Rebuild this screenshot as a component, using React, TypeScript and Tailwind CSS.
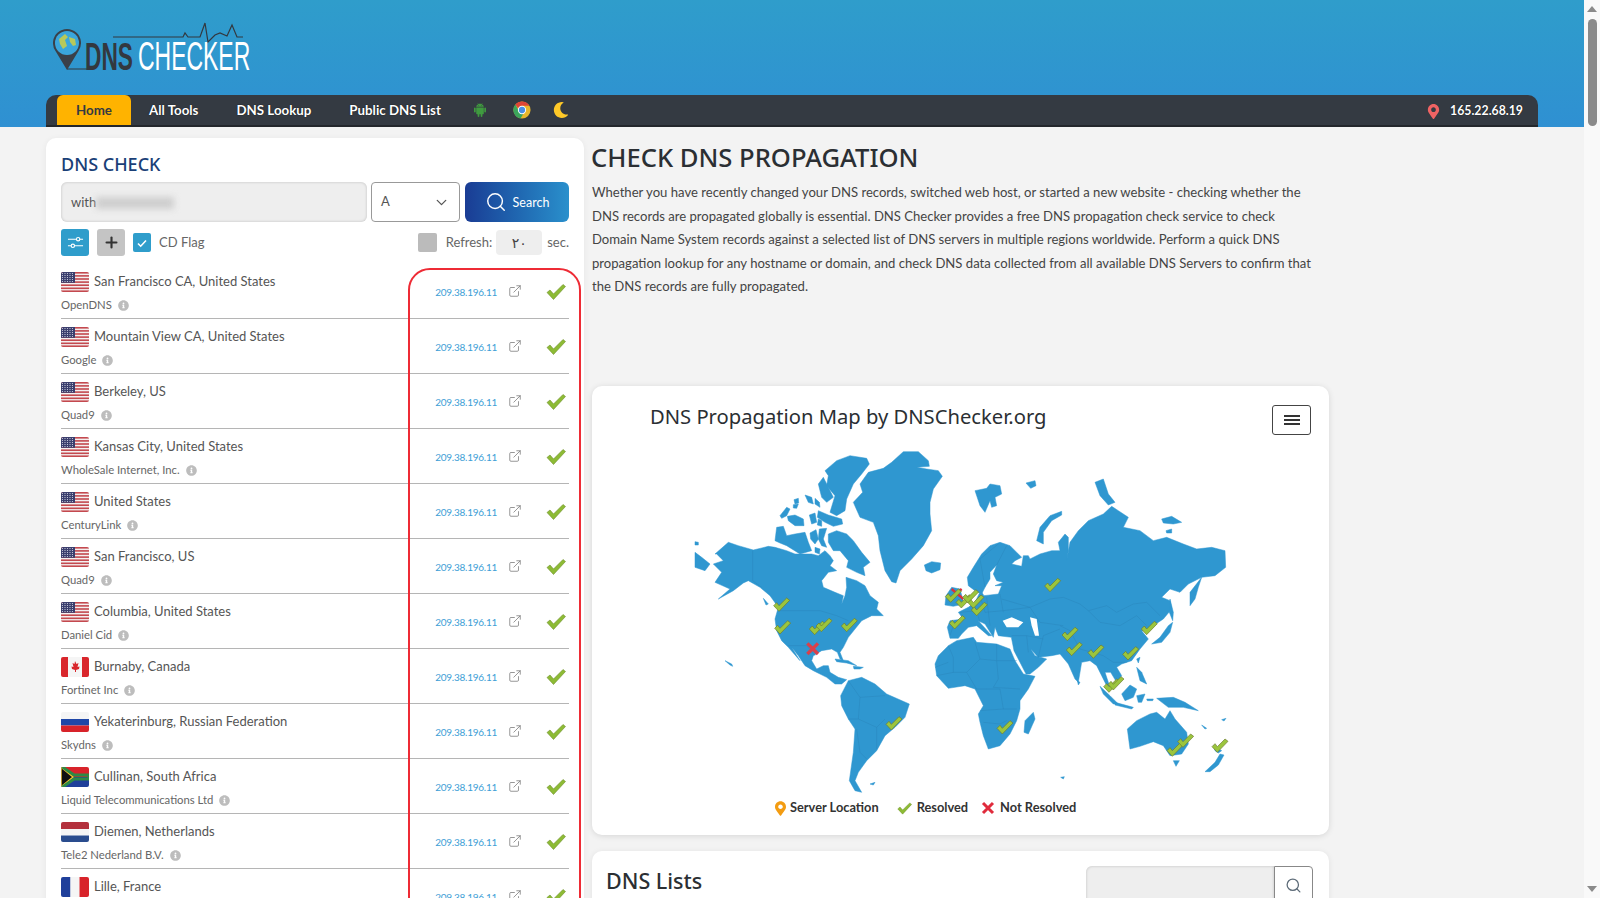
import { ChevronDown, ExternalLink, Plus, Search } from "lucide-react";
import { AiFillAndroid } from "react-icons/ai";
import { FaInfoCircle, FaMapMarkerAlt, FaMoon } from "react-icons/fa";

type Flag = "us" | "ca" | "ru" | "za" | "nl" | "fr";

const servers: { city: string; org: string; flag: Flag }[] = [
  { city: "San Francisco CA, United States", org: "OpenDNS", flag: "us" },
  { city: "Mountain View CA, United States", org: "Google", flag: "us" },
  { city: "Berkeley, US", org: "Quad9", flag: "us" },
  { city: "Kansas City, United States", org: "WholeSale Internet, Inc.", flag: "us" },
  { city: "United States", org: "CenturyLink", flag: "us" },
  { city: "San Francisco, US", org: "Quad9", flag: "us" },
  { city: "Columbia, United States", org: "Daniel Cid", flag: "us" },
  { city: "Burnaby, Canada", org: "Fortinet Inc", flag: "ca" },
  { city: "Yekaterinburg, Russian Federation", org: "Skydns", flag: "ru" },
  { city: "Cullinan, South Africa", org: "Liquid Telecommunications Ltd", flag: "za" },
  { city: "Diemen, Netherlands", org: "Tele2 Nederland B.V.", flag: "nl" },
  { city: "Lille, France", org: "Online S.A.S.", flag: "fr" },
];

// map outlines were traced from three crops, so each group has its own origin
const americasNorth = [
  "635,70 670,38 715,38 745,65 748,82 710,85 740,90 775,95 787,112 760,150 750,190 750,225 755,275 730,320 695,360 660,395 648,432 635,428 615,395 600,335 595,290 580,250 540,235 520,190 548,160 540,135 565,100 610,88",
  "435,95 470,65 510,50 560,58 568,75 545,105 520,135 500,180 495,215 470,230 450,220 465,170 440,140 445,110",
  "415,135 430,115 445,145 460,175 440,190 425,175",
  "342,182 355,178 356,192 345,195",
  "340,197 355,195 350,208 340,207",
  "375,168 395,175 400,195 385,190",
  "405,178 418,190 420,205 405,195",
  "300,230 320,205 330,210 320,230 305,238",
  "322,232 345,228 370,240 372,260 345,260 325,245",
  "388,228 405,222 410,250 395,255",
  "415,215 445,228 485,240 488,255 460,262 435,250 412,235",
  "415,240 425,245 425,262 412,258",
  "290,265 310,262 320,290 345,285 375,280 385,310 395,335 360,345 320,320 300,312 285,305",
  "390,282 408,272 415,300 405,315 392,300",
  "418,270 440,268 430,300 440,325 425,320 415,300",
  "445,285 470,275 500,285 520,305 545,340 570,370 550,385 555,410 530,400 500,385 505,365 480,335 460,335 445,310",
  "405,325 420,330 418,345 405,340",
  "105,345 145,310 175,320 220,333 265,322 285,325 320,335 345,345 395,345 415,350 435,335 450,350 460,365 450,380 470,395 445,400 425,425 430,445 465,460 490,470 485,495 495,470 500,445 498,415 530,425 555,440 570,470 595,490 590,510 610,530 575,530 545,545 525,570 505,595 490,625 480,640 490,665 480,660 472,640 455,630 425,635 400,650 395,665 410,690 430,680 445,680 450,700 475,715 500,722 485,735 465,735 440,715 400,695 375,680 355,650 335,625 360,665 325,625 305,605 290,575 285,540 295,505 270,470 240,445 205,425 190,432 160,455 115,480 150,450 105,430 125,400 100,375 130,365 110,345",
  "45,340 65,355 90,375 75,395 45,385",
  "45,308 55,310 55,318 45,318",
  "250,478 265,495 258,498",
  "135,665 155,675 158,682 150,678",
  "465,660 505,665 530,680 500,672 470,668",
  "520,682 550,685 540,690 522,690",
  "733,378 755,368 782,372 780,392 755,402 738,395",
];

const americasBorders = ["295,515 420,515 470,530 505,545", "218,335 218,425 245,445", "325,620 380,620 405,650"];

const eurasia = [
  "30,478 22,445 30,425 70,420 55,400 85,385 105,370 122,335 132,350 175,345 185,320 165,320 190,310 170,305 160,285 170,258 150,280 150,300 135,325 125,345 105,335 85,320 82,295 100,265 125,225 150,200 180,190 210,200 245,235 225,245 215,255 245,262 250,230 265,230 270,240 300,225 335,215 360,215 355,190 375,165 385,175 385,215 380,245 390,190 415,155 445,125 490,105 515,82 535,95 565,115 550,145 600,155 640,185 680,175 730,195 770,210 815,205 855,215 857,265 825,290 785,295 745,315 720,340 690,330 665,355 690,365 695,390 670,420 640,440 615,455 605,455 625,480 600,510 575,545 545,555 530,565 545,590 530,610 512,580 495,580 510,625 500,620 485,590 470,560 450,545 425,550 415,610 405,600 385,555 360,525 335,530 295,535 272,510 285,530 320,540 295,565 270,585 258,585 222,515 214,475 175,470 165,445 160,475 135,435 115,425 155,470 145,470 110,440 85,445 65,465 55,478",
  "105,35 140,28 150,15 180,20 185,45 165,55 170,80 155,85 150,65 135,100 120,80",
  "258,12 285,5 288,20 272,28",
  "290,185 300,145 330,110 365,97 365,108 335,125 310,160 310,195",
  "465,10 490,0 505,45 525,70 505,78 480,50",
  "665,120 695,112 725,130 700,135 670,132",
  "678,155 695,150 695,162 680,162",
  "35,325 60,330 72,375 40,382 15,378 18,350",
  "635,495 660,475 685,440 698,430 690,460 665,490",
  "690,360 700,400 698,425 688,400",
  "750,380 750,340 785,295 775,325 765,360",
  "590,540 600,535 595,552",
  "412,605 420,610 415,618",
];

const eurasiaWater = ["188,425 215,415 250,430 235,445 200,445", "270,415 290,420 297,470 285,470 275,440"];

const eurasiaBorders = [
  "185,360 270,385 330,360 370,355 420,375 445,395 500,380 530,400 580,375 620,370 660,410",
  "445,395 480,430 540,440 590,410 620,440",
  "270,385 300,430 370,440",
  "360,440 390,455 420,510 490,530",
  "295,535 310,470 360,450",
  "215,470 260,470 310,480",
  "260,470 265,520",
  "490,530 520,550 560,550",
  "120,350 135,400 190,395 270,385",
  "140,355 150,440",
  "180,345 190,400",
  "60,400 110,395 120,430",
  "45,425 30,470",
  "135,325 120,240 175,195",
  "170,258 200,200",
];

const south = [
  "345,75 355,50 385,20 410,5 460,-5 470,10 530,15 570,30 585,65 610,105 645,112 625,150 600,185 600,210 590,245 570,285 540,320 505,330 490,290 480,250 475,225 490,200 465,150 435,140 385,148 350,110",
  "615,245 640,220 645,240 625,285 612,280",
  "62,170 85,125 125,115 165,135 200,165 268,195 255,235 225,265 195,290 170,335 140,365 115,400 105,425 125,460 105,455 88,425 100,340 105,270 85,240 65,200",
  "150,435 165,430 160,438",
  "840,142 870,170 895,195 880,195 850,165",
  "905,165 930,138 950,150 940,175 915,185",
  "885,190 940,205 935,210 885,198",
  "950,170 975,165 965,190 955,190",
  "950,85 965,100 980,135 960,125",
  "1010,178 1060,175 1095,190 1135,215 1090,205 1045,205",
  "980,180 1000,180 998,185 982,185",
  "1205,242 1218,238 1212,246",
  "1145,258 1160,268 1155,270",
  "922,270 950,245 990,225 1010,220 1035,240 1050,215 1065,240 1100,280 1105,315 1085,345 1050,350 1030,320 1000,308 960,322 930,330",
  "1060,365 1078,365 1068,382",
  "1155,398 1185,370 1200,345 1212,348 1195,378 1170,398",
  "1180,320 1205,335 1195,342 1185,335",
  "722,415 733,413 730,420",
];

const southBorders = [
  "385,20 400,55 400,100 440,100 480,60 465,10",
  "530,15 530,65 590,65",
  "440,100 470,150",
  "480,60 530,65 535,120 520,145 600,150",
  "465,150 500,150 540,150 550,210 480,215",
  "550,210 590,210",
  "490,250 540,255 560,245",
  "350,110 400,100",
  "385,70 345,85",
  "85,125 120,175 195,170",
  "120,175 115,240 170,265 195,240",
  "85,240 115,240",
  "110,270 120,340 140,360",
  "170,265 170,330",
];

const resolved = [
  [305, 497], [308, 565], [412, 567], [432, 558], [508, 558],
  [820, 470], [852, 487], [872, 472], [888, 488], [898, 510], [832, 550], [1118, 438],
  [1170, 585], [1183, 630], [1248, 638], [1352, 643], [1408, 567], [1295, 740], [1308, 733],
  [642, 853], [975, 865], [1485, 932], [1517, 905], [1620, 920],
];

function FlagIcon({ flag }: { flag: Flag }) {
  return (
    <svg viewBox="0 0 28 20" className="h-5 w-7 shrink-0 rounded-[2px]">
      {flag === "us" && (
        <>
          <rect width="28" height="20" fill="#f4f0f0" />
          {[0, 3.1, 6.2, 9.3, 12.4, 15.5, 18.4].map((y) => (
            <rect key={y} y={y} width="28" height="1.6" fill="#c4494f" />
          ))}
          <rect width="14" height="10.8" fill="#3b3f6e" />
          {[1.5, 3.5, 5.5, 7.5, 9.5].map((y) =>
            [1.5, 4, 6.5, 9, 11.5].map((x) => <circle key={`${x}-${y}`} cx={x} cy={y} r="0.6" fill="#d8d8e4" />)
          )}
        </>
      )}
      {flag === "ca" && (
        <>
          <rect width="28" height="20" fill="#f5f5f5" />
          <rect width="7" height="20" fill="#d9262c" />
          <rect x="21" width="7" height="20" fill="#d9262c" />
          <path d="M14 4l1.5 3 2-1-1 4 2-.5-.5 2.500-3 1v2h-1v-2l-3-1-.5-2.500 2 .5-1-4 2 1z" fill="#d9262c" />
        </>
      )}
      {flag === "ru" && (
        <>
          <rect width="28" height="7" fill="#f5f5f5" />
          <rect y="7" width="28" height="6.500" fill="#1f47a8" />
          <rect y="13.500" width="28" height="6.500" fill="#d8232a" />
        </>
      )}
      {flag === "za" && (
        <>
          <rect width="28" height="10" fill="#d8232a" />
          <rect y="10" width="28" height="10" fill="#1f3f9a" />
          <path d="M0 0l12 10L0 20z" fill="#111" stroke="#f4c430" strokeWidth="1.500" />
          <path d="M0 -1l13 9h15v4H13L0 21" fill="none" stroke="#2d8a45" strokeWidth="3" />
        </>
      )}
      {flag === "nl" && (
        <>
          <rect width="28" height="7" fill="#b3303c" />
          <rect y="7" width="28" height="6.500" fill="#f5f5f5" />
          <rect y="13.500" width="28" height="6.500" fill="#2a4c8e" />
        </>
      )}
      {flag === "fr" && (
        <>
          <rect width="9.500" height="20" fill="#1f3f9a" />
          <rect x="9.500" width="9" height="20" fill="#f5f5f5" />
          <rect x="18.500" width="9.500" height="20" fill="#d8232a" />
        </>
      )}
    </svg>
  );
}

function CheckMark({ className }: { className: string }) {
  return (
    <svg viewBox="0 0 20 16" className={className}>
      <path d="M1 8.500l3-2.500 3.500 4L17 .500l2.500 2L7.500 15.500z" fill="#8dbb35" stroke="#6f8f2b" strokeWidth="0.600" />
    </svg>
  );
}

function ServerRow({ city, org, flag }: { city: string; org: string; flag: Flag }) {
  return (
    <div className="flex h-[55px] shrink-0 items-center border-b border-[#b5b5b5] pr-[3px]">
      <div className="flex-1 pt-[3px]">
        <div className="flex h-5 items-center gap-[5px]">
          <FlagIcon flag={flag} />
          <span className="pb-[1px] text-[13px] text-[#555]">{city}</span>
        </div>
        <div className="mt-[5px] flex h-4 items-center gap-[6px] text-[11.300px] text-[#666]">
          <span>{org}</span>
          <FaInfoCircle className="h-[11px] w-[11px] text-[#bdbdbd]" />
        </div>
      </div>
      <span className="pt-[2px] text-[10px] tracking-[-0.25px] text-[#3d9ed6]">209.38.196.11</span>
      <ExternalLink className="ml-[11px] h-[14px] w-[14px] text-[#777]" strokeWidth={1.300} />
      <CheckMark className="mt-[2px] ml-[24px] h-[16px] w-[20px]" />
    </div>
  );
}

function Logo() {
  return (
    <svg viewBox="0 0 200 60" className="h-[60px] w-[200px]">
      <path
        d="M14 47h20M60 15h70l2-4 3 4h12l5-14 3 19 7-7 5-2 7 3 5-11 5 12h6"
        fill="none"
        stroke="#33383f"
        strokeWidth="1.200"
      />
      <path d="M14 48L2.500 29a14 14 0 1 1 23 0z" fill="#3a4048" />
      <circle cx="14" cy="21" r="12" fill="#3aa6dc" />
      <path d="M6 17l6-5 3 3-3 3 2 6-4 3-3-5zM16 15l6 2 1 6-3 1-3-4z" fill="#b8c95a" />
      <text transform="translate(32 48) scale(0.583 1)" fill="#33383f" fontFamily="Liberation Sans" fontWeight="700" fontSize="39">
        DNS
      </text>
      <text transform="translate(85 48) scale(0.56 1)" fill="#fff" fontFamily="Liberation Sans" fontSize="41">
        CHECKER
      </text>
    </svg>
  );
}

function ChromeIcon() {
  return (
    <svg viewBox="0 0 20 20" className="h-[18px] w-[18px]">
      <circle cx="10" cy="10" r="9.500" fill="#e8b62c" />
      <path d="M10 .500a9.500 9.500 0 0 1 8.200 4.800H10a4.700 4.700 0 0 0-4.300 2.900L2.600 4A9.500 9.500 0 0 1 10 .500z" fill="#df4537" />
      <path d="M2.600 4l4.100 7.500a4.700 4.700 0 0 0 4.500 3.100l-2.800 4.800A9.500 9.500 0 0 1 2.600 4z" fill="#3ba55c" />
      <circle cx="10" cy="10" r="4.600" fill="#fff" />
      <circle cx="10" cy="10" r="3.500" fill="#4a8ee6" />
    </svg>
  );
}

function MapGroup({ x, y, land, lines, water = [] }: { x: number; y: number; land: string[]; lines: string[]; water?: string[] }) {
  return (
    <g transform={`translate(${x} ${y})`}>
      {land.map((points) => (
        <polygon key={points} points={points} fill="#2f97d0" stroke="#2f97d0" strokeWidth="1.500" strokeLinejoin="round" />
      ))}
      {water.map((points) => (
        <polygon key={points} points={points} fill="#fff" />
      ))}
      {lines.map((points) => (
        <polyline key={points} points={points} fill="none" stroke="#2a86bd" strokeWidth="1.500" />
      ))}
    </g>
  );
}

function WorldMap() {
  return (
    <svg viewBox="0 0 1680 1080" className="ml-[88px] h-[360px] w-[560px]">
      <MapGroup x={0} y={0} land={americasNorth} lines={americasBorders} />
      <MapGroup x={780} y={120} land={eurasia} lines={eurasiaBorders} water={eurasiaWater} />
      <MapGroup x={420} y={600} land={south} lines={southBorders} />
      <path d="M815 450l35 30M845 450l-35 30" stroke="#d9303f" strokeWidth="7" />
      <path d="M382 613l32 32M414 613l-32 32" stroke="#d9404a" strokeWidth="10" />
      {resolved.map(([x, y]) => (
        <polygon
          key={`${x}-${y}`}
          transform={`translate(${x} ${y})`}
          points="-24,3 -15,-6 -8,3 15,-20 24,-13 -8,20"
          fill="#9bc53d"
          stroke="#6d7a2e"
          strokeWidth="2"
        />
      ))}
    </svg>
  );
}

function ScrollBar() {
  return (
    <div className="flex h-[898px] w-4 shrink-0 flex-col items-center bg-[#f9f9f9]">
      <div className="mt-[6px] h-0 w-0 border-x-[5px] border-b-[6px] border-x-transparent border-b-[#8a8a8a]" />
      <div className="mt-[7px] h-[107px] w-[9px] rounded-full bg-[#8a8a8a]" />
      <div className="mt-auto mb-[6px] h-0 w-0 border-x-[5px] border-t-[6px] border-x-transparent border-t-[#8a8a8a]" />
    </div>
  );
}

export default function App() {
  return (
    <div className="flex h-[898px] overflow-hidden bg-[#f3f3f3] font-['Lato','DejaVu_Sans',sans-serif]">
      <div className="min-w-0 flex-1">
        <header className="h-[127px] bg-gradient-to-b from-[#2f9dcb] to-[#2f90d2] pt-[22px]">
          <div className="ml-[53px] h-[73px]">
            <Logo />
          </div>
          <nav className="mx-[46px] flex h-8 items-stretch rounded-t-[10px] border-b-2 border-[#23272c] bg-[#343a42] pt-0 pl-[11px] text-[13.300px] font-bold text-white [text-shadow:0_0_1px_#000]">
            <a className="flex w-[74px] items-center justify-center rounded-t-[6px] bg-[#ffb300] pt-[2px] text-[#343a42] [text-shadow:none]">Home</a>
            <a className="ml-[18px] flex items-center pt-[2px]">All Tools</a>
            <a className="ml-[38px] flex items-center pt-[2px]">DNS Lookup</a>
            <a className="ml-[38px] flex items-center pt-[2px]">Public DNS List</a>
            <span className="ml-[31px] flex items-center">
              <AiFillAndroid className="h-4 w-4 text-[#3f9a3f]" />
            </span>
            <span className="ml-[25px] flex items-center">
              <ChromeIcon />
            </span>
            <span className="ml-[22px] flex items-center">
              <FaMoon className="h-4 w-4 text-[#ffc928]" />
            </span>
            <span className="ml-auto flex items-center pt-[2px] pr-[15px] text-[12.300px]">
              <FaMapMarkerAlt className="mr-[9px] h-[15px] w-[15px] text-[#ef6363]" />
              165.22.68.19
            </span>
          </nav>
        </header>

        <main className="flex items-start gap-2 pt-[11px] pl-[46px]">
          <section className="relative w-[538px] shrink-0 rounded-[10px] bg-white px-[15px] pt-[13px] shadow-[0_1px_6px_rgba(0,0,0,0.06)]">
            <h2 className="h-[26px] font-['Noto_Sans'] text-[18px] leading-[26px] font-medium text-[#1a3f77]">DNS CHECK</h2>
            <div className="mt-[5px] flex h-10 gap-1 text-[13px]">
              <div className="flex w-[306px] items-center rounded-md bg-[#eee] pt-[2px] pl-[10px] text-[#555] shadow-[inset_0_0_3px_rgba(0,0,0,0.2)]">
                <span>with</span>
                <div className="h-3 w-[78px] bg-[#cfcfcf] blur-[3px]" />
              </div>
              <div className="flex w-[89px] items-center justify-between rounded-[4px] border border-[#999] bg-white px-[9px] text-[#555]">
                A
                <ChevronDown className="h-[17px] w-[17px]" strokeWidth={1.800} />
              </div>
              <button className="ml-[1px] flex w-[104px] items-center justify-center gap-[6px] rounded-md bg-gradient-to-r from-[#1a3c94] to-[#2a90cc] text-[12.500px] text-white">
                <Search className="h-[22px] w-[22px]" strokeWidth={1.600} />
                <span className="pt-[2px]">Search</span>
              </button>
            </div>
            <div className="mt-[7px] flex h-[27px] items-center text-[13px] text-[#666]">
              <button className="flex h-[27px] w-7 items-center justify-center rounded-[3px] bg-[#2f9dcb]">
                <svg viewBox="0 0 18 18" className="h-[17px] w-[17px]" fill="none" stroke="#fff" strokeWidth="1.200">
                  <path d="M1 5.500h9M13.500 5.500H17M1 12.500h3.500M8 12.500h9" />
                  <circle cx="11.800" cy="5.500" r="1.800" />
                  <circle cx="6.200" cy="12.500" r="1.800" />
                </svg>
              </button>
              <button className="ml-2 flex h-[27px] w-7 items-center justify-center rounded-[3px] bg-[#c4c4c4]">
                <Plus className="h-[17px] w-[17px] text-[#333]" strokeWidth={3} />
              </button>
              <span className="ml-2 flex h-[19px] w-[18px] items-center justify-center rounded-[2px] bg-[#2f9dcb]">
                <svg viewBox="0 0 12 12" className="h-3 w-3" fill="none" stroke="#fff" strokeWidth="1.600">
                  <path d="M2 6.500l2.700 2.700L10 3.500" />
                </svg>
              </span>
              <span className="ml-[8px]">CD Flag</span>
              <span className="ml-auto h-[19px] w-[19px] rounded-[2px] bg-[#bbb]" />
              <span className="ml-[9px]">Refresh:</span>
              <span className="ml-[4px] flex h-[25px] w-[46px] items-center justify-center rounded-[4px] bg-[#eee] text-[14px] text-[#444]">٢٠</span>
              <span className="ml-[5px]">sec.</span>
            </div>
            <div className="mt-2 flex flex-col">
              {servers.map((server) => (
                <ServerRow key={server.city} {...server} />
              ))}
            </div>
            <div className="absolute top-[130px] left-[362px] h-[800px] w-[173px] rounded-[22px] border-2 border-[#ee2b35]" />
          </section>

          <section className="w-[737px] shrink-0">
            <h1 className="-ml-[1px] h-[38px] font-['Noto_Sans'] text-[25.600px] leading-[40px] font-medium text-[#2b2f33]">CHECK DNS PROPAGATION</h1>
            <p className="mt-[5px] h-[205px] w-[729px] text-[13.100px] leading-[23.500px] text-[#444]">
              Whether you have recently changed your DNS records, switched web host, or started a new website - checking whether the DNS records are propagated globally is essential. DNS Checker provides a free DNS propagation check service to check Domain Name System records against a selected list of DNS servers in multiple regions worldwide. Perform a quick DNS propagation lookup for any hostname or domain, and check DNS data collected from all available DNS Servers to confirm that the DNS records are fully propagated.
            </p>
            <div className="h-[449px] rounded-[10px] bg-white shadow-[0_1px_6px_rgba(0,0,0,0.12)]">
              <div className="flex items-start justify-between pt-[19px] pr-[18px] pl-[58px]">
                <h3 className="font-['Noto_Sans'] text-[20.200px] leading-[22px] text-[#2b2f33]">DNS Propagation Map by DNSChecker.org</h3>
                <button className="flex h-[30px] w-[39px] flex-col items-center justify-center gap-[2px] rounded-[3px] border border-[#444] bg-white">
                  <span className="h-[2px] w-4 bg-[#333]" />
                  <span className="h-[2px] w-4 bg-[#333]" />
                  <span className="h-[2px] w-4 bg-[#333]" />
                </button>
              </div>
              <div className="mt-[4px]">
                <WorldMap />
              </div>
              <div className="mt-[1px] flex h-[16px] items-center pl-[183px] text-[12.800px] font-bold text-[#333]">
                <FaMapMarkerAlt className="h-[15px] w-[11px] text-[#f39c12]" />
                <span className="ml-[4px]">Server Location</span>
                <CheckMark className="ml-[18px] h-[13px] w-[15px]" />
                <span className="ml-[5px]">Resolved</span>
                <svg viewBox="0 0 14 14" className="ml-[13px] h-[14px] w-[14px]" stroke="#e02b3c" strokeWidth="3">
                  <path d="M2 2l10 10M12 2L2 12" />
                </svg>
                <span className="ml-[5px]">Not Resolved</span>
              </div>
            </div>
            <div className="mt-4 flex h-[120px] items-start justify-between rounded-[10px] bg-white pt-[15px] pr-[16px] pl-[14px] shadow-[0_1px_6px_rgba(0,0,0,0.08)]">
              <h3 className="font-['Noto_Sans'] text-[21.500px] leading-[30px] font-medium text-[#2b2f33]">DNS Lists</h3>
              <div className="flex h-[38px] w-[227px]">
                <div className="flex-1 rounded-l-md bg-[#eee] shadow-[inset_0_0_3px_rgba(0,0,0,0.2)]" />
                <button className="flex w-[39px] items-center justify-center rounded-r-[4px] border border-[#888] bg-white">
                  <Search className="h-[17px] w-[17px] text-[#5d6b78]" strokeWidth={1.800} />
                </button>
              </div>
            </div>
          </section>
        </main>
      </div>
      <ScrollBar />
    </div>
  );
}
